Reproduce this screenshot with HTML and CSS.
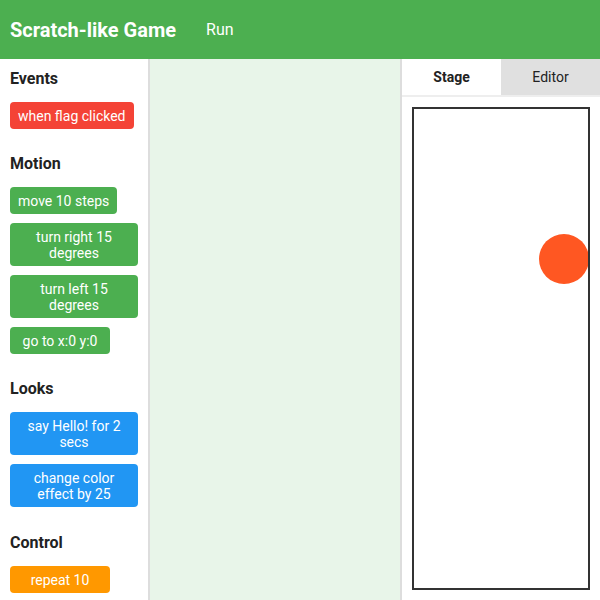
FILE: index.html
```html
<!DOCTYPE html>
<html>
<head>
<meta charset="utf-8">
<link rel="stylesheet" href="styles.css">
</head>
<body>
<header class="topbar">
  <h1 class="title">Scratch-like Game</h1>
  <span class="run">Run</span>
</header>
<div class="main">
  <aside class="palette">
    <h3 class="cat first">Events</h3>
    <div class="blocks">
      <div class="block events">when flag clicked</div>
    </div>
    <h3 class="cat">Motion</h3>
    <div class="blocks">
      <div class="block motion">move 10 steps</div>
      <div class="block motion">turn right 15 degrees</div>
      <div class="block motion">turn left 15 degrees</div>
      <div class="block motion">go to x:0 y:0</div>
    </div>
    <h3 class="cat">Looks</h3>
    <div class="blocks">
      <div class="block looks">say Hello! for 2 secs</div>
      <div class="block looks">change color effect by 25</div>
    </div>
    <h3 class="cat control-cat">Control</h3>
    <div class="blocks">
      <div class="block control">repeat 10</div>
    </div>
  </aside>
  <section class="workspace"></section>
  <section class="panel">
    <div class="tabs">
      <div class="tab active">Stage</div>
      <div class="tab">Editor</div>
    </div>
    <div class="stage-wrap">
      <div class="stage">
        <div class="sprite"></div>
      </div>
    </div>
  </section>
</div>
</body>
</html>
```
FILE: styles.css
```css
* { box-sizing: border-box; }
html, body { margin: 0; padding: 0; height: 100%; overflow: hidden; }
body {
  font-family: Roboto, "Liberation Sans", Arial, sans-serif;
  color: #222;
  background: #fff;
  display: flex;
  flex-direction: column;
}
.topbar {
  height: 59px;
  flex: none;
  background: #4CAF50;
  color: #fff;
  display: flex;
  align-items: center;
  padding: 0 10px;
}
.title {
  margin: 0;
  font-size: 20px;
  font-weight: 700;
}
.run {
  margin-left: 30px;
  font-size: 16px;
}
.main {
  flex: 1;
  display: flex;
  min-height: 0;
}
.palette {
  width: 150px;
  flex: none;
  border-right: 2px solid #ddd;
  padding: 0 10px;
  background: #fff;
}
.cat {
  margin: 25px 0 14px;
  font-size: 16px;
  font-weight: 700;
  line-height: 19px;
  color: #222;
}
.cat.first { margin-top: 10px; }
.cat.control-cat { margin-top: 26px; }
.blocks {
  display: flex;
  flex-direction: column;
  align-items: flex-start;
  gap: 9px;
}
.block {
  color: #fff;
  font-size: 14px;
  line-height: 16px;
  padding: 5.5px 8px;
  border-radius: 4px;
  text-align: center;
  min-width: 100px;
  max-width: 128px;
}
.events { background: #f44336; }
.motion { background: #4CAF50; }
.looks { background: #2196F3; }
.control { background: #FF9800; }
.workspace {
  width: 252px;
  flex: none;
  background: #e8f5e9;
  border-right: 2px solid #ddd;
}
.panel {
  flex: 1;
  display: flex;
  flex-direction: column;
}
.tabs {
  display: flex;
  height: 38px;
  flex: none;
  border-bottom: 2px solid #eee;
}
.tab {
  flex: 1;
  display: flex;
  align-items: center;
  justify-content: center;
  font-size: 14px;
  background: #e0e0e0;
  color: #222;
}
.tab.active {
  background: #fff;
  font-weight: 700;
}
.stage-wrap {
  flex: 1;
  padding: 10px;
  display: flex;
}
.stage {
  flex: 1;
  border: 2px solid #333;
  position: relative;
  overflow: hidden;
  background: #fff;
}
.sprite {
  position: absolute;
  left: 125px;
  top: 125px;
  width: 50px;
  height: 50px;
  border-radius: 50%;
  background: #FF5722;
}
```
